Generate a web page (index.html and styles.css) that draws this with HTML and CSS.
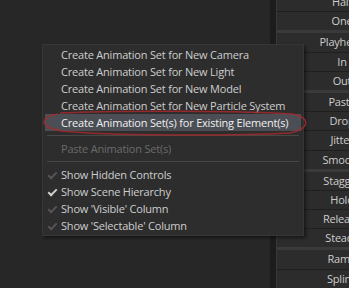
FILE: index.html
```html
<!DOCTYPE html>
<html lang="en">
<head>
    <meta charset="UTF-8">
    <link rel="stylesheet" href="styles.css">
    <title>Animation Sets</title>
</head>
<body>
    <div class="main"></div>
    <div class="divider"></div>
    <div class="panel">
        <div class="group first">
            <div class="btn">Half</div>
            <div class="btn">One</div>
        </div>
        <div class="group">
            <div class="btn">Playhead</div>
            <div class="btn">In</div>
            <div class="btn">Out</div>
        </div>
        <div class="group">
            <div class="btn">Paste</div>
            <div class="btn">Drop</div>
            <div class="btn">Jitter</div>
            <div class="btn">Smooth</div>
        </div>
        <div class="group">
            <div class="btn">Stagger</div>
            <div class="btn">Hold</div>
            <div class="btn">Release</div>
            <div class="btn">Steady</div>
        </div>
        <div class="group">
            <div class="btn">Ramp</div>
            <div class="btn">Spline</div>
        </div>
    </div>

    <ul class="menu">
        <li class="item">Create Animation Set for New Camera</li>
        <li class="item">Create Animation Set for New Light</li>
        <li class="item">Create Animation Set for New Model</li>
        <li class="item">Create Animation Set for New Particle System</li>
        <li class="item active">Create Animation Set(s) for Existing Element(s)</li>
        <li class="sep"></li>
        <li class="item disabled">Paste Animation Set(s)</li>
        <li class="sep"></li>
        <li class="item check">Show Hidden Controls</li>
        <li class="item check on">Show Scene Hierarchy</li>
        <li class="item check">Show 'Visible' Column</li>
        <li class="item check">Show 'Selectable' Column</li>
    </ul>

    <svg class="circle" width="349" height="288" viewBox="0 0 349 288">
        <path d="M60 113 C 120 110, 250 111, 292 114 C 312 117, 309 130, 290 133 C 230 136, 110 136, 62 131 C 38 127, 40 117, 58 114"/>
    </svg>
</body>
</html>
```

FILE: styles.css
```css
body,ul,li{padding:0;margin:0}
ul,li{list-style:none}
body{
    width:349px;
    height:288px;
    overflow:hidden;
    display:flex;
    background:#272727;
    font-family:"Open Sans","Noto Sans",sans-serif;
    font-size:11px;
    letter-spacing:-0.2px;
    color:#cdcdcd;
}
.main{flex:0 0 270px}
.divider{
    flex:0 0 6px;
    background:#1c1c1c;
}
.panel{
    flex:0 0 130px;
    margin-top:-7px;
    background:#2c2c2c;
    border-left:1px solid #383838;
}
.group + .group{border-top:3px solid #3a3a3a}
.btn{
    height:18.2px;
    line-height:18px;
    text-align:center;
    border-bottom:1px solid #1f1f1f;
}
.group .btn:last-child{border-bottom:none}

.menu{
    position:absolute;
    left:42px;
    top:44px;
    width:256px;
    padding:1px 2px 1px;
    background:#2d2d2d;
    border:1px solid #363636;
    box-shadow:2px 2px 3px rgba(0,0,0,0.45);
}
.item{
    position:relative;
    height:17px;
    line-height:17px;
    padding-left:16px;
    white-space:nowrap;
}
.item.active{
    background:#4b4e54;
    color:#f0f0f0;
}
.item.disabled{color:#6b6b6b}
.sep{
    height:1px;
    margin:4px 2px;
    background:#484848;
}
.check::before{
    content:"";
    position:absolute;
    left:5px;
    top:4px;
    width:3px;
    height:7px;
    border:solid #555;
    border-width:0 2px 2px 0;
    transform:rotate(45deg);
}
.check.on::before{border-color:#d0d0d0}

.circle{
    position:absolute;
    left:0;
    top:0;
    pointer-events:none;
}
.circle path{
    fill:none;
    stroke:#a42a2e;
    stroke-width:1.6;
    opacity:0.85;
}
```
